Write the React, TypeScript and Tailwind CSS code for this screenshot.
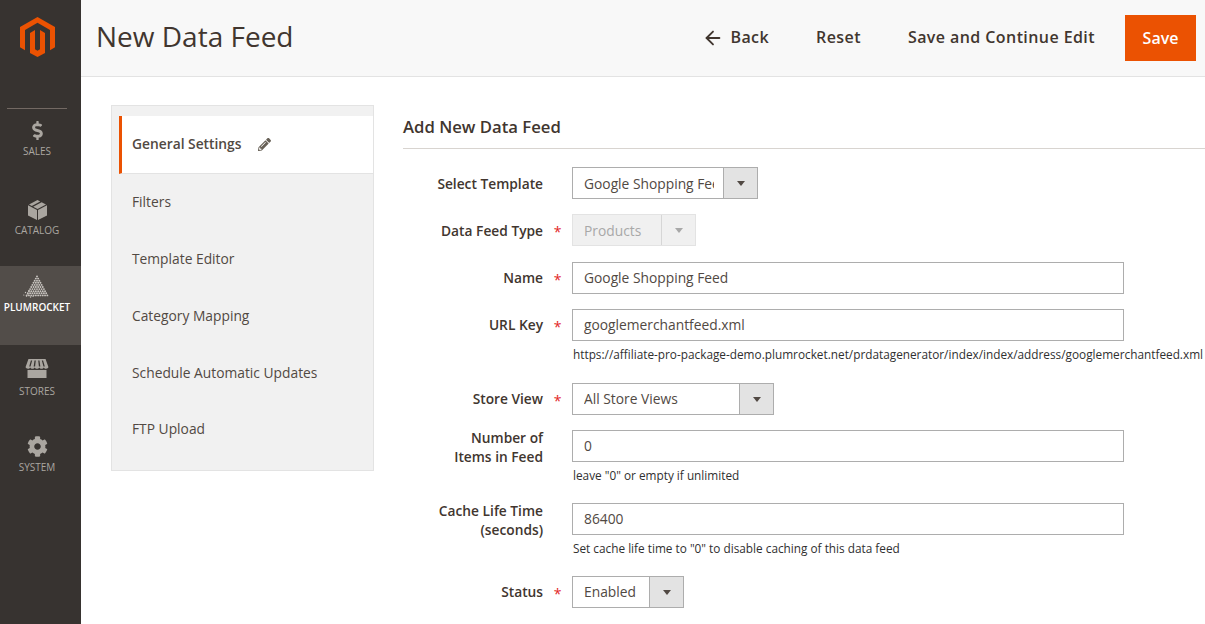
import { ArrowLeft } from "lucide-react";
import { FaCog, FaDollarSign, FaPencilAlt } from "react-icons/fa";

const MagentoLogo = () => (
  <svg width="35" height="40" viewBox="0 0 35 40" fill="#eb5202">
    <path d="M17.5 0 35 10.1v20.2l-5 2.9V13L17.5 5.8 5 13v20.2l-5-2.9V10.1z" />
    <path d="M10 15.9 15 13v19.2l2.5 1.5 2.5-1.5V13l5 2.9v20L17.5 40 10 35.9z" />
  </svg>
);

const BoxIcon = () => (
  <svg width="19" height="20" viewBox="0 0 19 20" fill="#aaa6a0">
    <path d="M0 5.2 9 10v10L0 15.4z" />
    <path d="M19 5.2 10 10v10l9-4.6z" />
    <path d="M9.5 0 12.2 1.4 3.8 5.9 1 4.4z" />
    <path d="M13.6 2.2 18 4.4 9.5 8.9 5.2 6.7z" />
  </svg>
);

const StoreIcon = () => (
  <svg width="24" height="19" viewBox="0 0 24 20" fill="#aaa6a0">
    <path d="M3 0h18l3 8.5c0 1.2-1.4 1.8-2.4 1.8-1.2 0-2-.6-2.4-1.4-.4.8-1.4 1.4-2.4 1.4s-2-.6-2.4-1.4C14.100 9.700 13 10.300 12 10.300s-2.100-.6-2.400-1.400c-.4.800-1.400 1.400-2.400 1.400S5.200 9.700 4.800 8.900c-.4.800-1.200 1.400-2.400 1.400C1.400 10.300 0 9.700 0 8.500z" />
    <path d="M2 11.500h20V20H2z" />
    <path fill="#373330" d="M5.600 1.500h1.300L5.200 8H3.800zM9.400 1.500h1.300L10 8H8.500zM13.300 1.500h1.300L15.500 8H14zM17.100 1.500h1.300L20.200 8h-1.400z" />
  </svg>
);

const dots: [number, number][] = [];
for (let row = 0; row < 10; row++) {
  const count = row + 1;
  for (let i = 0; i < count; i++) {
    dots.push([14 + (i - row / 2) * 2.3, 1.5 + row * 2.1]);
  }
}

const PlumrocketIcon = () => (
  <svg width="29" height="23" viewBox="0 0 29 23" fill="#c9c5c0">
    {dots.map(([x, y], i) => (
      <circle key={i} cx={x} cy={y} r={0.95} />
    ))}
    <circle cx="0.800" cy="20" r="0.6" />
    <circle cx="2.500" cy="17.500" r="0.7" />
    <circle cx="3.500" cy="21" r="0.7" />
    <circle cx="5" cy="19" r="0.7" />
    <circle cx="6" cy="15.500" r="0.7" />
    <circle cx="7.500" cy="22" r="0.7" />
    <circle cx="10" cy="21.500" r="0.6" />
  </svg>
);

const NavItem = ({
  icon,
  label,
  className,
  gap,
}: {
  icon: React.ReactNode;
  label: string;
  className: string;
  gap: string;
}) => (
  <div className={`flex w-[74px] flex-col items-center ${className}`}>
    <div className="flex h-[24px] items-end justify-center">{icon}</div>
    <span className={`${gap} text-[10px] leading-[14px] text-[#aaa6a0]`}>{label}</span>
  </div>
);

const Caret = ({ disabled }: { disabled?: boolean }) => (
  <div
    className={`flex w-[34px] shrink-0 items-center justify-center border-l ${
      disabled ? "border-[#d6d6d6] bg-[#f0f0f0]" : "border-[#adadad] bg-[#e3e3e3]"
    }`}
  >
    <div
      className={`h-0 w-0 border-x-[4.5px] border-t-[5px] border-x-transparent ${
        disabled ? "border-t-[#a8a8a8]" : "border-t-[#514943]"
      }`}
    />
  </div>
);

const Select = ({
  value,
  width,
  disabled,
  lower,
}: {
  value: string;
  width: string;
  disabled?: boolean;
  lower?: boolean;
}) => (
  <div
    className={`flex h-[32px] border ${width} ${
      disabled ? "border-[#e3e3e3] bg-[#f0f0f0] text-[#a8a8a8]" : "border-[#adadad] bg-white text-[#514943]"
    }`}
  >
    <div
      className={`min-w-0 flex-1 whitespace-nowrap pl-[11px] pr-[9px] text-[13.8px] ${
        lower ? "leading-[32px]" : "leading-[30px]"
      }`}
    >
      <div className="overflow-hidden">{value}</div>
    </div>
    <Caret disabled={disabled} />
  </div>
);

const TextInput = ({ value }: { value: string }) => (
  <div className="h-[32px] w-[552px] border border-[#adadad] bg-white pl-[11px] text-[13.8px] leading-[30px] text-[#514943]">
    {value}
  </div>
);

const Row = ({
  label,
  required,
  note,
  className,
  labelClass = "",
  children,
}: {
  label: React.ReactNode;
  required?: boolean;
  note?: string;
  className: string;
  labelClass?: string;
  children: React.ReactNode;
}) => (
  <div className={`flex ${className}`}>
    <div className="flex h-[32px] w-[140px] shrink-0 items-center justify-end text-right text-[13.75px] leading-[18.500px] font-semibold text-[#41362f]">
      <div className={labelClass}>{label}</div>
    </div>
    <div className="flex h-[32px] w-[29px] shrink-0 items-center justify-center pt-[3px] text-[14px] text-[#e22626]">
      {required ? "*" : ""}
    </div>
    <div className="min-w-0 flex-1">
      {children}
      {note && (
        <div className="mt-[5px] ml-[1px] whitespace-nowrap text-[11.8px] leading-[16px] text-[#303030]">{note}</div>
      )}
    </div>
  </div>
);

const tabs = ["Filters", "Template Editor", "Category Mapping", "Schedule Automatic Updates"];

export default function App() {
  return (
    <div className="flex h-[624px] w-[1205px] overflow-hidden bg-white font-['Open_Sans',sans-serif]">
      <aside className="flex w-[81px] shrink-0 flex-col bg-[#373330]">
        <div className="flex w-[75px] justify-center pt-[17px]">
          <MagentoLogo />
        </div>
        <div className="mx-[7px] mt-[51px] h-px w-[60px] bg-[#736963]" />
        <NavItem
          className="mt-[7px]"
          gap="mt-[4px]"
          label="SALES"
          icon={<FaDollarSign size={19} color="#aaa6a0" />}
        />
        <NavItem className="mt-[38px]" gap="mt-[3px]" label="CATALOG" icon={<BoxIcon />} />
        <div className="mt-[29px] h-[79px] bg-[#524d49] pt-[9px]">
          <div className="flex w-[74px] flex-col items-center">
            <PlumrocketIcon />
            <span className="mt-[2px] text-[10px] leading-[14px] font-semibold text-white">PLUMROCKET</span>
          </div>
        </div>
        <NavItem className="mt-[9px]" gap="mt-[6px]" label="STORES" icon={<StoreIcon />} />
        <NavItem className="mt-[35px]" gap="mt-[3px]" label="SYSTEM" icon={<FaCog size={21} color="#aaa6a0" />} />
      </aside>

      <main className="min-w-0 flex-1">
        <header className="flex h-[77px] items-center border-b border-[#e3e3e3] bg-[#f8f8f8] pr-[9px] pl-[15px]">
          <h1 className="mb-[4px] text-[28px] leading-[36px] font-normal text-[#41362f]">New Data Feed</h1>
          <div className="ml-auto flex items-center text-[16px] font-semibold tracking-[0.42px] text-[#41362f]">
            <ArrowLeft size={22} strokeWidth={2} className="mr-[6px] mb-[1px]" />
            <span className="mb-[2px]">Back</span>
            <span className="mb-[2px] ml-[47px]">Reset</span>
            <span className="mb-[2px] ml-[47px]">Save and Continue Edit</span>
            <button className="ml-[30px] h-[46px] w-[71px] bg-[#eb5202] font-semibold tracking-normal text-white">
              Save
            </button>
          </div>
        </header>

        <div className="flex pt-[28px] pl-[30px]">
          <nav className="h-[366px] w-[263px] shrink-0 border border-[#e3e3e3] bg-[#f1f1f1] text-[13.8px] text-[#514943]">
            <div className="mt-[10px] ml-[7px] flex h-[58px] items-center border-b border-[#e3e3e3] border-l-[3px] border-l-[#eb5202] bg-white pb-[1px] pl-[10px] font-semibold">
              General Settings
              <FaPencilAlt size={13} className="ml-[16px] text-[#676056]" />
            </div>
            {tabs.map((t) => (
              <div key={t} className="flex h-[57px] items-center pb-[1px] pl-[20px]">
                {t}
              </div>
            ))}
            <div className="flex h-[56px] items-center pb-[2px] pl-[20px]">FTP Upload</div>
          </nav>

          <section className="ml-[29px] min-w-0 flex-1">
            <h2 className="h-[44px] border-b border-[#d8d4d0] pt-[10px] text-[16.7px] leading-[24px] font-semibold text-[#41362f]">
              Add New Data Feed
            </h2>
            <Row className="mt-[18px]" labelClass="mt-[2px]" label="Select Template">
              <Select value="Google Shopping Feed" width="w-[186px]" lower />
            </Row>
            <Row className="mt-[15px]" labelClass="mt-[2px]" label="Data Feed Type" required>
              <Select value="Products" width="w-[124px]" disabled lower />
            </Row>
            <Row className="mt-[16px]" label="Name" required>
              <TextInput value="Google Shopping Feed" />
            </Row>
            <Row
              className="mt-[15px]"
              label="URL Key"
              required
              note="https://affiliate-pro-package-demo.plumrocket.net/prdatagenerator/index/index/address/googlemerchantfeed.xml"
            >
              <TextInput value="googlemerchantfeed.xml" />
            </Row>
            <Row className="mt-[21px]" label="Store View" required>
              <Select value="All Store Views" width="w-[202px]" />
            </Row>
            <Row
              className="mt-[15px]"
              labelClass="mt-[3px]"
              label={
                <>
                  Number of
                  <br />
                  Items in Feed
                </>
              }
              note={'leave "0" or empty if unlimited'}
            >
              <TextInput value="0" />
            </Row>
            <Row
              className="mt-[20px]"
              labelClass="mt-[3px]"
              label={
                <>
                  Cache Life Time
                  <br />
                  (seconds)
                </>
              }
              note={'Set cache life time to "0" to disable caching of this data feed'}
            >
              <TextInput value="86400" />
            </Row>
            <Row className="mt-[20px]" label="Status" required>
              <Select value="Enabled" width="w-[112px]" />
            </Row>
          </section>
        </div>
      </main>
    </div>
  );
}
